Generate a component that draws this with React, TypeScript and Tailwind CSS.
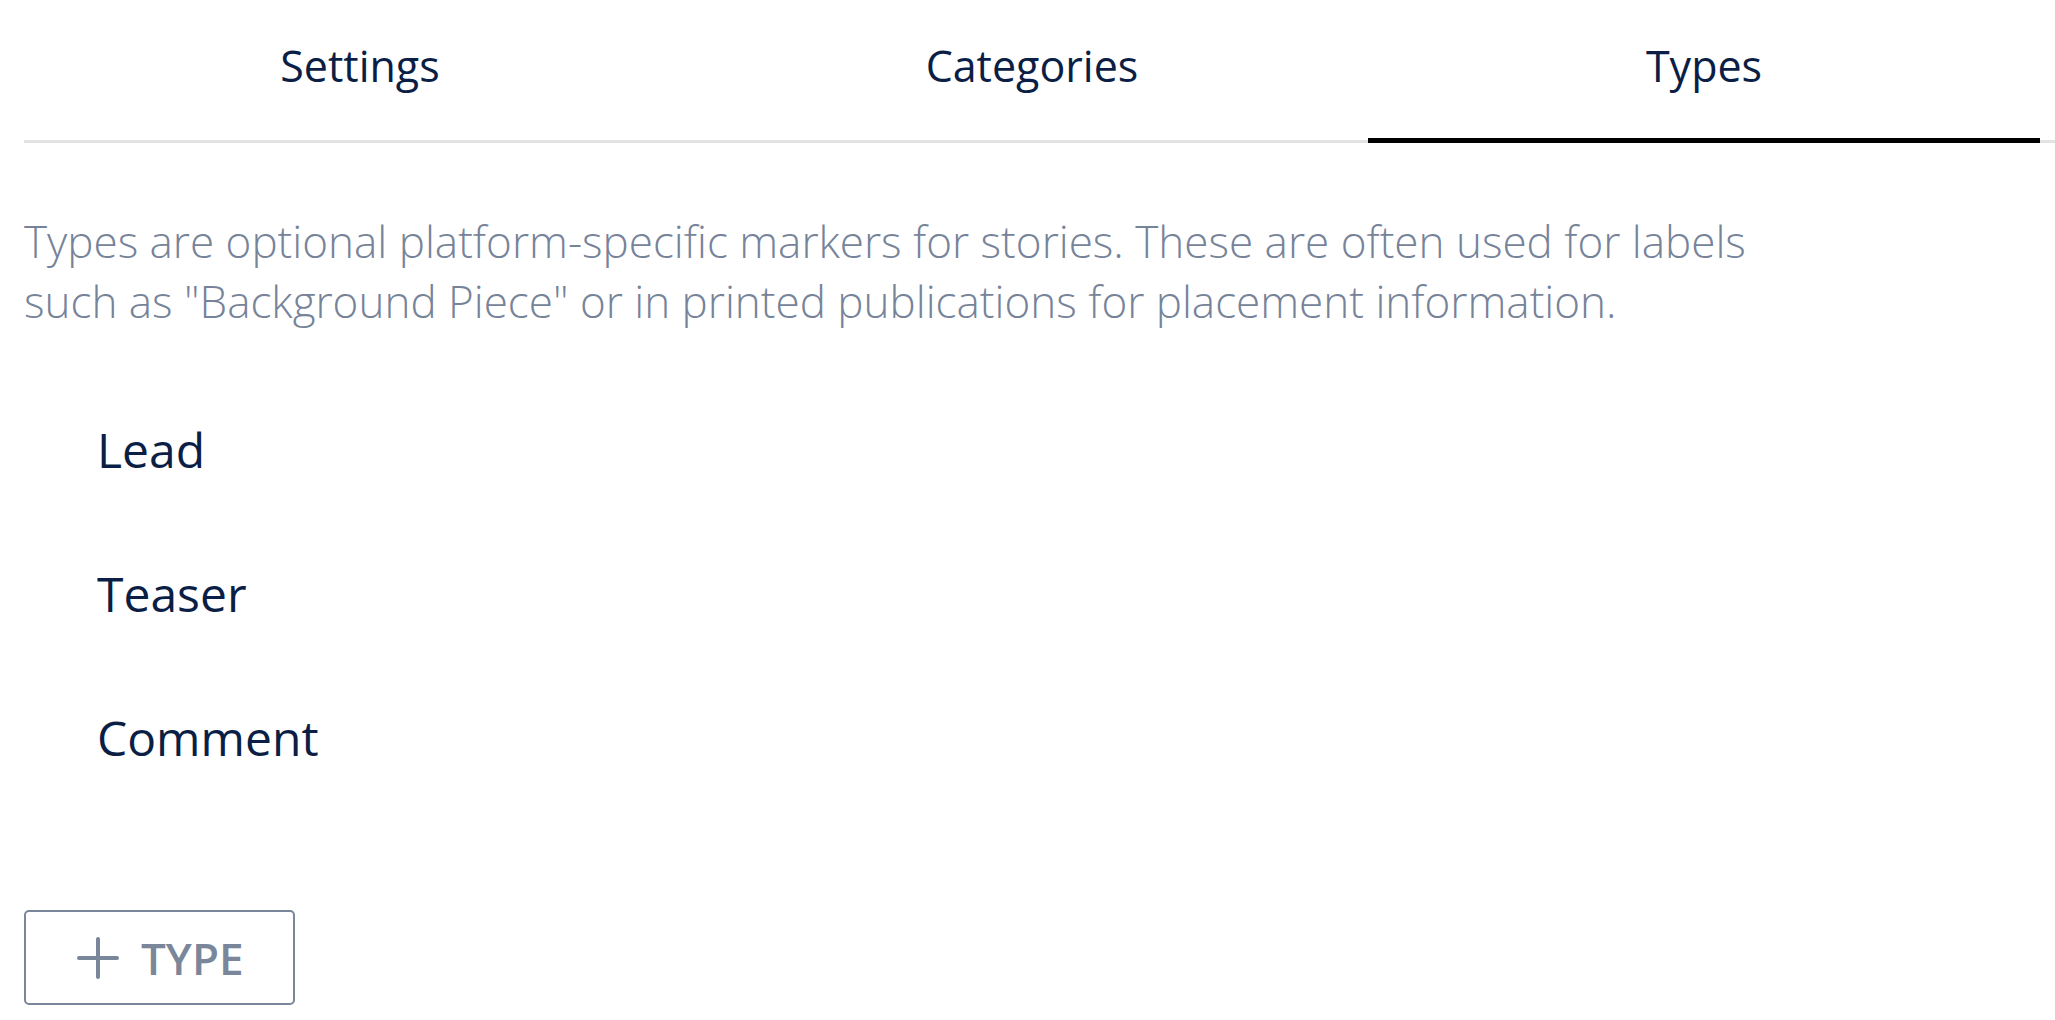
import React, { useState } from 'react';

const tabs = ['Settings', 'Categories', 'Types'];
const types = ['Lead', 'Teaser', 'Comment'];

function PlusIcon() {
    return (
        <svg className="w-[44px] h-[44px]" viewBox="0 0 44 44" fill="none" stroke="currentColor" strokeWidth={4} strokeLinecap="round">
            <path d="M22 3v38M3 22h38" />
        </svg>
    );
}

export default function App() {
    const [active, setActive] = useState(2);

    return (
        <div className="bg-white min-h-screen pl-[24px] font-['Open_Sans',sans-serif]">
            <nav className="border-b-[3px] border-[#e3e3e3]">
                <div className="grid grid-cols-3 w-[2016px]">
                    {tabs.map((tab, index) => (
                        <button
                            key={tab}
                            onClick={() => setActive(index)}
                            className={`h-[143px] pb-[6px] flex items-center justify-center text-[43px] text-[#0b1e45] border-b-[5px] -mb-[3px] ${
                                active === index ? 'border-black' : 'border-transparent'
                            }`}
                        >
                            {tab}
                        </button>
                    ))}
                </div>
            </nav>

            <p className="mt-[68px] text-[44px] leading-[60px] font-light text-[#768399] max-w-[1800px]">
                Types are optional platform-specific markers for stories. These are often used for labels
                <br />
                such as "Background Piece" or in printed publications for placement information.
            </p>

            <ul className="mt-[47px] pl-[73px]">
                {types.map((type) => (
                    <li key={type} className="h-[144px] leading-[144px] text-[48px] text-[#0b1e45]">
                        {type}
                    </li>
                ))}
            </ul>

            <button className="mt-[100px] w-[271px] h-[95px] border-2 border-[#7a869a] rounded-[5px] flex items-center gap-[21px] pl-[50px] text-[#7a869a]">
                <PlusIcon />
                <span className="text-[44px] font-semibold leading-none">TYPE</span>
            </button>
        </div>
    );
}
